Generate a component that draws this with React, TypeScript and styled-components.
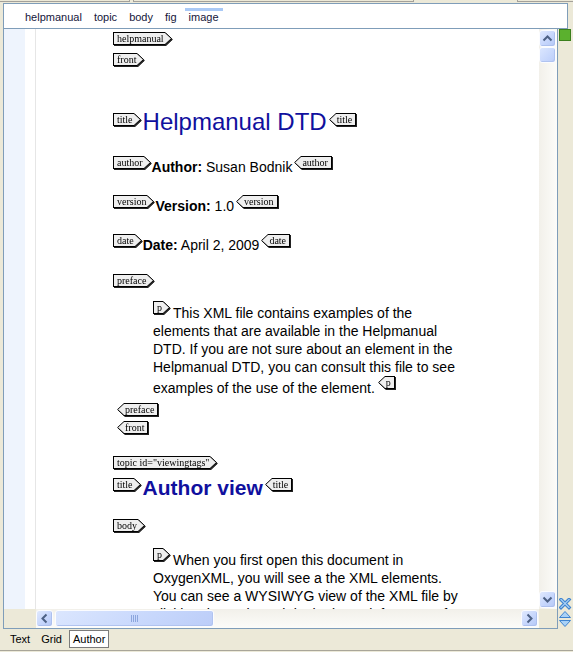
import React from "react";
import styled, { createGlobalStyle } from "styled-components";

const GlobalStyle = createGlobalStyle`
  html, body { margin: 0; padding: 0; }
  body { background: #ece9d8; font-family: "Liberation Sans", Arial, sans-serif; }
  #root { width: 573px; height: 652px; overflow: hidden; }
`;

const Window = styled.div`
  width: 573px;
  height: 652px;
  background: #ece9d8;
  display: flex;
  flex-direction: column;
  overflow: hidden;
`;

/* ---------- top strip (bottom edge of tabs above) ---------- */
const TopStrip = styled.div`
  height: 3px;
  display: flex;
`;
const TopTab = styled.div<{ $w: number; $open?: boolean; $l?: boolean; $r?: boolean }>`
  flex-shrink: 0;
  width: ${(p) => p.$w}px;
  height: 2px;
  box-sizing: border-box;
  border-bottom: ${(p) => (p.$open ? "none" : "1px solid #a3a09a")};
  border-left: ${(p) => (p.$l ? "1px solid #a3a09a" : "none")};
  border-right: ${(p) => (p.$r ? "1px solid #a3a09a" : "none")};
`;

/* ---------- breadcrumb ---------- */
const Breadcrumb = styled.div`
  margin-left: 3px;
  width: 565px;
  height: 26px;
  box-sizing: border-box;
  border: 1px solid #7f9db9;
  background: #fff;
  display: flex;
  align-items: flex-start;
  gap: 4px;
  padding: 4px 0 0 17px;
`;
const Crumb = styled.span<{ $active?: boolean }>`
  padding: 0 4px;
  border-top: 3px solid ${(p) => (p.$active ? "#a9c9f6" : "transparent")};
  font: 11px/13px "Liberation Sans", Arial, sans-serif;
  color: #15153a;
`;

/* ---------- main editor ---------- */
const Main = styled.div`
  display: flex;
  height: 600px;
  margin-left: 3px;
`;
const Editor = styled.div`
  width: 555px;
  height: 600px;
  box-sizing: border-box;
  border: 1px solid #7f9db9;
  border-top: none;
  display: flex;
  flex-direction: column;
  background: #fff;
`;
const EditorBody = styled.div`
  display: flex;
  height: 580px;
`;
const Gutter = styled.div`
  flex-shrink: 0;
  width: 21px;
  background: #eef4fd;
`;
const GutterGap = styled.div`
  flex-shrink: 0;
  width: 10px;
  border-right: 1px solid #e6e6e6;
  background: #fff;
`;
const Viewport = styled.div`
  flex: 1;
  min-width: 0;
  overflow: hidden;
  background: #fff;
`;
const Doc = styled.div`
  padding: 3px 0 0 77px;
  display: flex;
  flex-direction: column;
  align-items: flex-start;
  font-family: "Liberation Sans", Arial, sans-serif;
  color: #000;
`;

/* ---------- tags ---------- */
const TagShape = styled.span<{ $ml?: number; $mr?: number; $va: number }>`
  display: inline-flex;
  flex-shrink: 0;
  height: 13px;
  vertical-align: ${(p) => p.$va}px;
  margin-left: ${(p) => p.$ml ?? 0}px;
  margin-right: ${(p) => p.$mr ?? 0}px;
  filter: drop-shadow(1px 1px 0 #222);
`;
const TagBox = styled.span<{ $end?: boolean }>`
  align-self: baseline;
  height: 13px;
  box-sizing: border-box;
  border: 1px solid #000;
  ${(p) => (p.$end ? "border-left: none;" : "border-right: none;")}
  background: #efefef;
  padding: ${(p) => (p.$end ? "0 3px 0 1px" : "0 1px 0 3px")};
  font: 10px/11px "Liberation Serif", "Times New Roman", serif;
  font-weight: normal;
  color: #000;
  white-space: nowrap;
`;
const ArrowSvg = styled.svg`
  display: block;
  flex-shrink: 0;
`;

const Tag = ({
  name,
  end,
  ml,
  mr,
  va = 7,
}: {
  name: string;
  end?: boolean;
  ml?: number;
  mr?: number;
  va?: number;
}) => (
  <TagShape $ml={ml} $mr={mr} $va={va}>
    {end && (
      <ArrowSvg width="7" height="13" viewBox="0 0 7 13">
        <path d="M7 0.5 L0.6 6.5 L7 12.5 Z" fill="#efefef" />
        <path d="M7 0.5 L0.6 6.5 L7 12.5" fill="none" stroke="#000" strokeWidth="1" />
      </ArrowSvg>
    )}
    <TagBox $end={end}>{name}</TagBox>
    {!end && (
      <ArrowSvg width="7" height="13" viewBox="0 0 7 13">
        <path d="M0 0.5 L6.4 6.5 L0 12.5 Z" fill="#efefef" />
        <path d="M0 0.5 L6.4 6.5 L0 12.5" fill="none" stroke="#000" strokeWidth="1" />
      </ArrowSvg>
    )}
  </TagShape>
);

const TagRow = styled.div<{ $mt: number; $indent?: number }>`
  display: flex;
  align-items: flex-start;
  height: 14px;
  margin-top: ${(p) => p.$mt}px;
  margin-left: ${(p) => p.$indent ?? 0}px;
`;
const TitleLine = styled.div<{ $mt: number; $size: number; $bold?: boolean }>`
  margin-top: ${(p) => p.$mt}px;
  font-size: ${(p) => p.$size}px;
  font-weight: ${(p) => (p.$bold ? 700 : 400)};
  line-height: 28px;
  color: #10109e;
  white-space: nowrap;
`;
const InfoLine = styled.div<{ $mt: number }>`
  margin-top: ${(p) => p.$mt}px;
  font-size: 14px;
  line-height: 18px;
  white-space: nowrap;
`;
const Label = styled.b`
  font-weight: 700;
`;
const Para = styled.div<{ $mt: number }>`
  margin-top: ${(p) => p.$mt}px;
  margin-left: 40px;
  width: 312px;
  font-size: 14px;
  line-height: 18px;
`;

/* ---------- scrollbars ---------- */
const VScroll = styled.div`
  flex-shrink: 0;
  width: 18px;
  box-sizing: border-box;
  padding: 1px 0;
  display: flex;
  flex-direction: column;
  background: linear-gradient(to right, #f2f0ea, #fcfcf9);
`;
const HRow = styled.div`
  display: flex;
  height: 19px;
  background: #ece9d8;
`;
const HFiller = styled.div`
  flex-shrink: 0;
  width: 32px;
`;
const HScroll = styled.div`
  flex-shrink: 0;
  width: 503px;
  box-sizing: border-box;
  padding-right: 1px;
  display: flex;
  align-items: center;
  background: linear-gradient(to bottom, #f2f0ea, #fcfcf9);
`;
const Corner = styled.div`
  flex: 1;
`;
const ScrollBtn = styled.div`
  flex-shrink: 0;
  width: 17px;
  height: 17px;
  box-sizing: border-box;
  border: 1px solid #fbfcff;
  border-radius: 3px;
  background: linear-gradient(135deg, #e0e9fe 0%, #c6d6fc 55%, #b5c8f6 100%);
  box-shadow: inset -1px -1px 0 #adc0ee;
  display: flex;
  align-items: center;
  justify-content: center;
`;
const Thumb = styled.div<{ $w?: number; $h?: number; $ml?: number }>`
  flex-shrink: 0;
  width: ${(p) => (p.$w ? `${p.$w}px` : "17px")};
  height: ${(p) => (p.$h ? `${p.$h}px` : "17px")};
  margin-left: ${(p) => p.$ml ?? 0}px;
  box-sizing: border-box;
  border: 1px solid #fbfcff;
  border-radius: 3px;
  background: linear-gradient(135deg, #dbe6fe 0%, #c7d7fc 60%, #bccdf8 100%);
  box-shadow: inset -1px -1px 0 #b0c3f0;
  display: flex;
  align-items: center;
  justify-content: center;
`;
const Spacer = styled.div`
  flex: 1;
`;
const ChevronSvg = styled.svg<{ $rot: number }>`
  display: block;
  transform: rotate(${(p) => p.$rot}deg);
`;
const Chevron = ({ dir }: { dir: "up" | "down" | "left" | "right" }) => {
  const rot = { up: 0, right: 90, down: 180, left: 270 }[dir];
  return (
    <ChevronSvg $rot={rot} width="15" height="15" viewBox="0 0 15 15">
      <path d="M3.5 9.5 L7.5 5.5 L11.5 9.5" fill="none" stroke="#4d6185" strokeWidth="2" />
    </ChevronSvg>
  );
};
const Grip = () => (
  <svg width="8" height="7" viewBox="0 0 8 7">
    {[0.5, 2.5, 4.5, 6.5].map((x) => (
      <line key={x} x1={x} y1="0" x2={x} y2="7" stroke="#8ca6dd" strokeWidth="1" />
    ))}
  </svg>
);

/* ---------- right side column ---------- */
const SideCol = styled.div`
  flex-shrink: 0;
  width: 15px;
  box-sizing: border-box;
  padding: 0 0 1px 1px;
  display: flex;
  flex-direction: column;
`;
const GreenBox = styled.div`
  width: 12px;
  height: 12px;
  box-sizing: border-box;
  background: #5bb12e;
  border: 1px solid #3a7f1c;
`;

/* ---------- bottom tabs ---------- */
const BottomTabs = styled.div`
  display: flex;
  align-items: flex-start;
  gap: 3px;
  height: 21px;
  box-sizing: border-box;
  padding: 1px 0 0 6px;
`;
const BTab = styled.div<{ $selected?: boolean }>`
  padding: 0 3px;
  border: 1px solid ${(p) => (p.$selected ? "#7b7b7b" : "transparent")};
  background: ${(p) => (p.$selected ? "#fff" : "transparent")};
  font: 11px/16px "Liberation Sans", Arial, sans-serif;
  color: #000;
`;
const BottomLine = styled.div`
  height: 1px;
  background: #a9a699;
  margin-bottom: 1px;
`;

const crumbs = ["helpmanual", "topic", "body", "fig", "image"];

export default function App() {
  return (
    <>
      <GlobalStyle />
      <Window>
        <TopStrip>
          <TopTab $w={130} $r />
          <TopTab $w={3} $open />
          <TopTab $w={281} $l $r />
          <TopTab $w={103} $open />
          <TopTab $w={56} $l />
        </TopStrip>

        <Breadcrumb>
          {crumbs.map((c) => (
            <Crumb key={c} $active={c === "image"}>
              {c}
            </Crumb>
          ))}
        </Breadcrumb>

        <Main>
          <Editor>
            <EditorBody>
              <Gutter />
              <GutterGap />
              <Viewport>
                <Doc>
                  <TagRow $mt={0}>
                    <Tag name="helpmanual" />
                  </TagRow>
                  <TagRow $mt={7}>
                    <Tag name="front" />
                  </TagRow>

                  <TitleLine $mt={41} $size={24}>
                    <Tag name="title" mr={2} />
                    Helpmanual DTD
                    <Tag name="title" end ml={2} />
                  </TitleLine>

                  <InfoLine $mt={20}>
                    <Tag name="author" mr={1} va={6} />
                    <Label>Author:</Label> Susan Bodnik
                    <Tag name="author" end ml={2} va={6} />
                  </InfoLine>

                  <InfoLine $mt={19}>
                    <Tag name="version" mr={1} va={6} />
                    <Label>Version:</Label> 1.0
                    <Tag name="version" end ml={2} va={6} />
                  </InfoLine>

                  <InfoLine $mt={19}>
                    <Tag name="date" mr={1} va={6} />
                    <Label>Date:</Label> April 2, 2009
                    <Tag name="date" end ml={2} va={6} />
                  </InfoLine>

                  <TagRow $mt={20}>
                    <Tag name="preface" />
                  </TagRow>

                  <Para $mt={13}>
                    <Tag name="p" mr={3} />
                    This XML file contains examples of the elements that are available in the
                    Helpmanual DTD. If you are not sure about an element in the Helpmanual DTD, you
                    can consult this file to see examples of the use of the element.
                    <Tag name="p" end ml={3} />
                  </Para>

                  <TagRow $mt={6} $indent={4}>
                    <Tag name="preface" end />
                  </TagRow>
                  <TagRow $mt={4} $indent={4}>
                    <Tag name="front" end />
                  </TagRow>

                  <TagRow $mt={21}>
                    <Tag name={'topic id="viewingtags"'} />
                  </TagRow>

                  <TitleLine $mt={4} $size={21} $bold>
                    <Tag name="title" mr={2} />
                    Author view
                    <Tag name="title" end ml={2} />
                  </TitleLine>

                  <TagRow $mt={17}>
                    <Tag name="body" />
                  </TagRow>

                  <Para $mt={15}>
                    <Tag name="p" mr={3} />
                    When you first open this document in OxygenXML, you will see a the XML
                    elements. You can see a WYSIWYG view of the XML file by clicking the Author tab
                    in the lower left corner of the document window. The tags are shown around each
                    element so that you can see the structure of the document.
                  </Para>
                </Doc>
              </Viewport>
              <VScroll>
                <ScrollBtn>
                  <Chevron dir="up" />
                </ScrollBtn>
                <Thumb $h={16} />
                <Spacer />
                <ScrollBtn>
                  <Chevron dir="down" />
                </ScrollBtn>
              </VScroll>
            </EditorBody>
            <HRow>
              <HFiller />
              <HScroll>
                <ScrollBtn>
                  <Chevron dir="left" />
                </ScrollBtn>
                <Thumb $w={159} $ml={2}>
                  <Grip />
                </Thumb>
                <Spacer />
                <ScrollBtn>
                  <Chevron dir="right" />
                </ScrollBtn>
              </HScroll>
              <Corner />
            </HRow>
          </Editor>

          <SideCol>
            <GreenBox />
            <Spacer />
            <svg width="13" height="30" viewBox="0 0 13 30">
              <path d="M2 1.5 L10 9.5 M10 1.5 L2 9.5" stroke="#3f84cf" strokeWidth="3.4" strokeLinecap="square" />
              <path d="M2 1.5 L10 9.5 M10 1.5 L2 9.5" stroke="#a9d1f6" strokeWidth="1.2" strokeLinecap="square" />
              <path d="M6 13.5 L11.5 19.5 L0.5 19.5 Z" fill="#a9d1f6" stroke="#3f84cf" strokeWidth="1" />
              <path d="M0.5 22.5 L11.5 22.5 L6 28.5 Z" fill="#a9d1f6" stroke="#3f84cf" strokeWidth="1" />
            </svg>
          </SideCol>
        </Main>

        <BottomTabs>
          <BTab>Text</BTab>
          <BTab>Grid</BTab>
          <BTab $selected>Author</BTab>
        </BottomTabs>
        <BottomLine />
      </Window>
    </>
  );
}
